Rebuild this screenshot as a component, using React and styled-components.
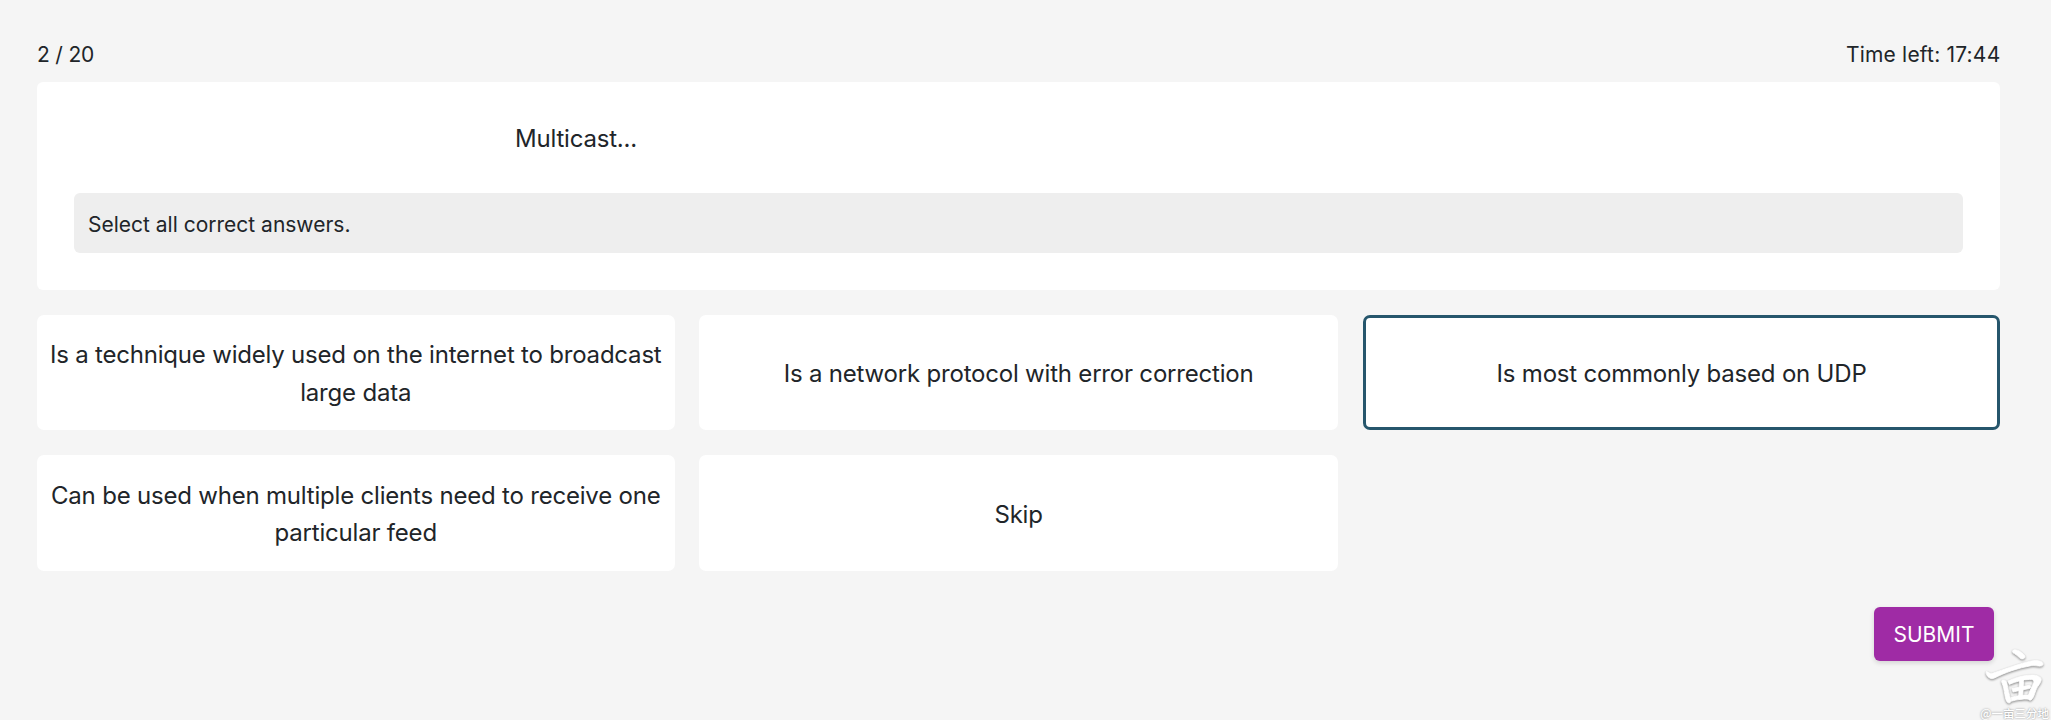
import React from 'react';
import styled, { createGlobalStyle } from 'styled-components';

const GlobalStyle = createGlobalStyle`
  * { box-sizing: border-box; }
  body {
    margin: 0;
    background: #f5f5f5;
    color: #212529;
    font-family: Inter, "Liberation Sans", sans-serif;
  }
`;

const Page = styled.main`
  position: relative;
  width: 2051px;
  height: 720px;
  padding: 37px 50.6px 0 37px;
  overflow: hidden;
  background: #f5f5f5;
`;

const TopBar = styled.header`
  display: flex;
  justify-content: space-between;
  height: 45px;
  font-size: 21px;
  line-height: 36px;
`;

const Counter = styled.span`
  letter-spacing: ${(p) => p.$spacing || '0'};
`;

const QuestionCard = styled.section`
  height: 208px;
  padding: 37px;
  border-radius: 6px;
  background: #fff;
`;

const Question = styled.h1`
  height: 37px;
  margin: 0 0 37px;
  padding-left: 441px;
  font-size: 24px;
  font-weight: 400;
  letter-spacing: -0.2px;
  line-height: 39px;
`;

const Hint = styled.p`
  height: 60px;
  margin: 0;
  padding: 0 14px;
  border-radius: 6px;
  background: #eee;
  font-size: 21px;
  line-height: 63px;
`;

const Answers = styled.div`
  display: grid;
  grid-template-columns: 637.5px 639.6px 1fr;
  grid-auto-rows: 115.8px;
  gap: 24.7px 24.3px;
  margin-top: 24.7px;
`;

const Answer = styled.button`
  display: flex;
  align-items: center;
  justify-content: center;
  padding: 2.4px 0 0;
  border: 3px solid ${(p) => (p.$selected ? '#26566c' : '#fff')};
  border-radius: 7px;
  background: #fff;
  color: inherit;
  font: 400 24px/37.4px Inter, "Liberation Sans", sans-serif;
  letter-spacing: -0.2px;
  text-align: center;
`;

const Actions = styled.div`
  display: flex;
  justify-content: flex-end;
  margin-top: 36.5px;
  padding-right: 6.4px;
`;

const Submit = styled.button`
  width: 120px;
  height: 54px;
  padding: 2px 0 0;
  border: 0;
  border-radius: 6px;
  background: #9f2ba5;
  box-shadow: 0 2px 5px rgba(0, 0, 0, 0.14);
  color: #fff;
  font: 400 21px/36px Inter, "Liberation Sans", sans-serif;
`;

const Watermark = styled.div`
  position: absolute;
  right: 0;
  bottom: 0;
  width: 76px;
  height: 80px;
`;

const Brush = styled.svg`
  display: block;
  width: 76px;
  height: 80px;
  filter: drop-shadow(0.5px 1px 1px rgba(0, 0, 0, 0.45));
`;

const Handle = styled.span`
  position: absolute;
  right: 2px;
  bottom: 0;
  color: #fff;
  font: 500 11.5px/14px "Noto Sans CJK SC", sans-serif;
  text-shadow: 0 0 2px rgba(0, 0, 0, 0.5);
  white-space: nowrap;
`;

const answers = [
  { id: 1, lines: ['Is a technique widely used on the internet to broadcast', 'large data'] },
  { id: 2, lines: ['Is a network protocol with error correction'] },
  { id: 3, lines: ['Is most commonly based on UDP'], selected: true },
  { id: 4, lines: ['Can be used when multiple clients need to receive one', 'particular feed'] },
  { id: 5, lines: ['Skip'] },
];

export default function App() {
  return (
    <Page>
      <GlobalStyle />
      <TopBar>
        <Counter $spacing="-0.2px">2 / 20</Counter>
        <Counter $spacing="0.2px">Time left: 17:44</Counter>
      </TopBar>
      <QuestionCard>
        <Question>Multicast...</Question>
        <Hint>Select all correct answers.</Hint>
      </QuestionCard>
      <Answers>
        {answers.map((a) => (
          <Answer key={a.id} $selected={a.selected}>
            <span>
              {a.lines.map((line, i) => (
                <React.Fragment key={line}>
                  {i > 0 && <br />}
                  {line}
                </React.Fragment>
              ))}
            </span>
          </Answer>
        ))}
      </Answers>
      <Actions>
        <Submit>SUBMIT</Submit>
      </Actions>
      <Watermark>
        <Brush viewBox="0 0 76 80" fill="#fff" stroke="#fff" strokeWidth="0.8" strokeLinejoin="round">
          <path d="M37.5 11c1-1.800 3-1.500 5-.8 3 1.200 5.800 3.500 7.300 5.800.8 1.500-.8 3.200-2.800 3-2.500-.3-4-3.500-9-6.200z" />
          <path d="M11.500 31.500c2 .8 3.500 2.300 6 1.800C29 29.500 43 24 55 21.200c4-.9 8-1.200 11 .3 3 1.600 2.500 4.200-.2 4.600-3 .3-6-1-9.500-.4C43 28 30 32.500 19.500 38c-3 1.600-5.800 0-7.400-2.300-1-1.600-1.300-3-.6-4.200z" />
          <path d="M27.500 40c2-.5 3.800.6 4.300 3 1.200 5.500 2 10.500 4.200 17 .6 2-1.500 3.800-3.300 2.600C29.500 60 30 50 27 43c-.6-1.500-.5-2.600.5-3z" />
          <path d="M33 41c7-3.400 15-5.800 24-6 5 0 9.500 1.800 9.200 5-.5 3.800-3.500 5.500-5.200 10-1.600 4-2.400 8.500-5 10-1.800.8-3.500-1-3-3.200 1.200-5.800 4.600-10.500 5.800-14.500.5-2.200-1-3-4-2.900-7 .2-14 2.300-20.500 5z" />
          <path d="M45 38.500c2-.8 3.500.5 3.600 3L47.500 59h-4l.9-17z" />
          <path d="M37 48.500l17-3.200c2-.2 2.500 2.700.5 3.200L38 52zM36 57.500c6-2 12-2.500 18.500-2.500l-1 4.200c-6-.6-11 .4-17 2z" />
        </Brush>
        <Handle>@一亩三分地</Handle>
      </Watermark>
    </Page>
  );
}
